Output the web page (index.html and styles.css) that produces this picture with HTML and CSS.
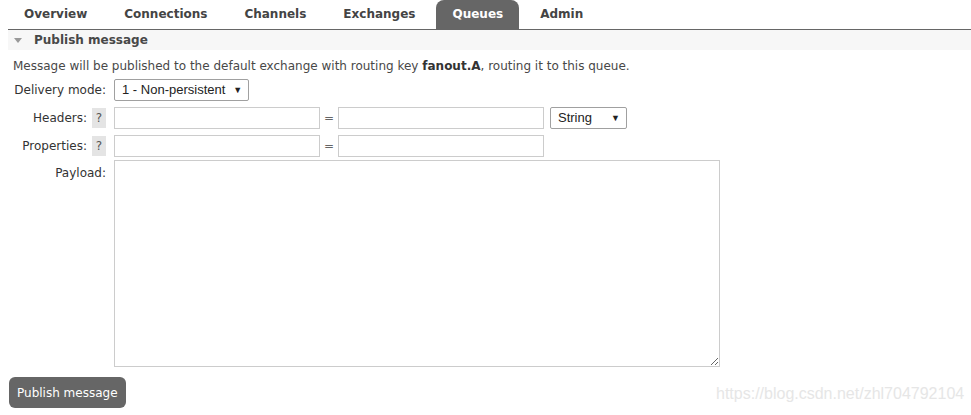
FILE: index.html
```html
<!DOCTYPE html>
<html lang="en">
<head>
    <meta charset="UTF-8">
    <title>Queues - Publish message</title>
    <link rel="stylesheet" href="styles.css">
</head>
<body>

    <!-- Main navigation -->
    <ul class="tabs">
        <li>Overview</li>
        <li>Connections</li>
        <li>Channels</li>
        <li>Exchanges</li>
        <li class="active">Queues</li>
        <li>Admin</li>
    </ul>

    <div class="section">
        <h2 class="section-title"><span class="arrow"></span>Publish message</h2>

        <div class="section-body">
            <p class="intro">Message will be published to the default exchange with routing key <b>fanout.A</b>, routing it to this queue.</p>

            <form class="publish-form">
                <div class="row">
                    <label class="label">Delivery mode:</label>
                    <div class="select mode">1 - Non-persistent <span class="caret">&#9660;</span></div>
                </div>
                <div class="row">
                    <label class="label">Headers: <span class="help">?</span></label>
                    <input type="text" class="field">
                    <span class="eq">=</span>
                    <input type="text" class="field">
                    <div class="select type">String <span class="caret">&#9660;</span></div>
                </div>
                <div class="row props-row">
                    <label class="label">Properties: <span class="help">?</span></label>
                    <input type="text" class="field">
                    <span class="eq">=</span>
                    <input type="text" class="field">
                </div>
                <div class="row payload-row">
                    <label class="label">Payload:</label>
                    <textarea class="payload"></textarea>
                </div>
                <button type="button" class="submit">Publish message</button>
            </form>
        </div>
    </div>

    <div class="watermark">https://blog.csdn.net/zhl704792104</div>

</body>
</html>
```

FILE: styles.css
```css
body {
    font-family: 'DejaVu Sans', Verdana, sans-serif;
    font-size: 12px;
    color: #484848;
    margin: 0;
    background: #fff;
}
.tabs {
    list-style: none;
    display: flex;
    gap: 5px;
    margin: 0 0 0 8px;
    padding: 0;
    border-bottom: 1px solid #666;
}
.tabs li {
    height: 29px;
    line-height: 28px;
    padding: 0 16px;
    font-weight: bold;
    font-size: 12px;
    color: #444;
    border-radius: 8px 8px 0 0;
}
.tabs li.active {
    background: #666;
    color: #fff;
}
.section {
    margin-left: 8px;
}
.section-title {
    margin: 0;
    height: 20px;
    line-height: 18px;
    background: #f7f7f7;
    font-size: 12px;
    font-weight: bold;
    color: #484848;
    padding-left: 6px;
    display: flex;
    align-items: center;
}
.arrow {
    width: 0;
    height: 0;
    border-left: 4px solid transparent;
    border-right: 4px solid transparent;
    border-top: 5px solid #999;
    margin-right: 12px;
}
.section-body {
    padding: 8px 0 0 5px;
}
.intro {
    margin: 0 0 5px 0;
    line-height: 16px;
}
.intro b {
    color: #333;
}
.row {
    display: flex;
    align-items: center;
    margin-bottom: 6px;
}
.props-row {
    margin-bottom: 3px;
}
.label {
    width: 93px;
    margin-right: 8px;
    text-align: right;
    color: #333;
    white-space: nowrap;
    display: flex;
    justify-content: flex-end;
    align-items: center;
    gap: 5px;
}
.help {
    display: inline-block;
    width: 14px;
    height: 20px;
    line-height: 20px;
    text-align: center;
    background: #e4e4e4;
    color: #555;
}
.select {
    font-family: 'Liberation Sans', Arial, sans-serif;
    font-size: 13px;
    color: #222;
    height: 20px;
    line-height: 20px;
    border: 1px solid #a0a0a0;
    border-radius: 2px;
    padding: 0 6px 0 7px;
    white-space: nowrap;
    display: flex;
    justify-content: space-between;
    background: #fff;
}
.select .caret {
    font-size: 9px;
    margin-left: 8px;
}
.mode {
    width: 120px;
}
.type {
    width: 62px;
    margin-left: 6px;
}
.field {
    width: 202px;
    height: 18px;
    border: 1px solid #ccc;
    padding: 1px;
    margin: 0;
}
.eq {
    width: 18px;
    text-align: center;
    color: #666;
}
.payload-row {
    align-items: flex-start;
    margin-bottom: 10px;
}
.payload-row .label {
    margin-top: 6px;
}
.payload {
    width: 600px;
    height: 201px;
    border: 1px solid #ccc;
    padding: 2px;
    margin: 0;
    resize: both;
}
.submit {
    margin-left: -4px;
    background: #666;
    color: #fff;
    border: none;
    border-radius: 6px;
    font-family: inherit;
    font-size: 12px;
    padding: 0 8px;
    height: 31px;
}
.watermark {
    position: absolute;
    left: 716px;
    top: 385px;
    font-family: 'Liberation Sans', Arial, sans-serif;
    font-size: 16px;
    color: #e6e6e6;
}
```
